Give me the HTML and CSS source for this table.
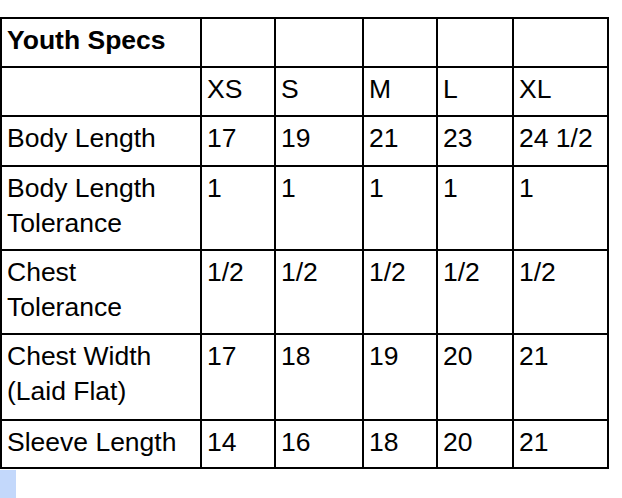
FILE: index.html
```html
<!DOCTYPE html>
<html lang="en">
<head>
<meta charset="utf-8">
<title>Youth Specs</title>
<link rel="stylesheet" href="styles.css">
</head>
<body>
<div class="page">
  <table class="specs">
    <colgroup>
      <col class="c-label">
      <col class="c-xs">
      <col class="c-s">
      <col class="c-m">
      <col class="c-l">
      <col class="c-xl">
    </colgroup>
    <tbody>
      <tr class="r1"><th class="title">Youth Specs</th><td></td><td></td><td></td><td></td><td></td></tr>
      <tr class="r2"><td></td><td>XS</td><td>S</td><td>M</td><td>L</td><td>XL</td></tr>
      <tr class="r3"><td>Body Length</td><td>17</td><td>19</td><td>21</td><td>23</td><td>24 1/2</td></tr>
      <tr class="r4"><td>Body Length Tolerance</td><td>1</td><td>1</td><td>1</td><td>1</td><td>1</td></tr>
      <tr class="r5"><td>Chest Tolerance</td><td>1/2</td><td>1/2</td><td>1/2</td><td>1/2</td><td>1/2</td></tr>
      <tr class="r6"><td>Chest Width (Laid Flat)</td><td>17</td><td>18</td><td>19</td><td>20</td><td>21</td></tr>
      <tr class="r7"><td>Sleeve Length</td><td>14</td><td>16</td><td>18</td><td>20</td><td>21</td></tr>
    </tbody>
  </table>
  <div class="cursor"></div>
</div>
</body>
</html>
```

FILE: styles.css
```css
html, body {
  margin: 0;
  padding: 0;
  background: #ffffff;
}

.page {
  padding-top: 17px;
  display: flex;
  flex-direction: column;
  align-items: flex-start;
  gap: 1px;
}

.specs {
  border-collapse: separate;
  border-spacing: 0;
  table-layout: fixed;
  width: 609px;
  border-top: 2px solid #000;
  border-left: 2px solid #000;
  font-family: "Liberation Sans", Arial, sans-serif;
  font-size: 26.5px;
  line-height: 35px;
  color: #000;
}

.specs th,
.specs td {
  box-sizing: border-box;
  border-right: 2px solid #000;
  border-bottom: 2px solid #000;
  padding: 4px 4px 0 5px;
  vertical-align: top;
  text-align: left;
  font-weight: normal;
  overflow: hidden;
}

.specs th.title {
  font-weight: bold;
}

.c-label { width: 200px; }
.c-xs { width: 74px; }
.c-s { width: 88px; }
.c-m { width: 74px; }
.c-l { width: 76px; }
.c-xl { width: 95px; }

.r1 { height: 49px; }
.r2 { height: 49px; }
.r3 { height: 50px; }
.r4 { height: 84px; }
.r5 { height: 84px; }
.r6 { height: 86px; }
.r7 { height: 48px; }

.cursor {
  width: 16px;
  height: 28px;
  background: #c3d8fb;
}
```
